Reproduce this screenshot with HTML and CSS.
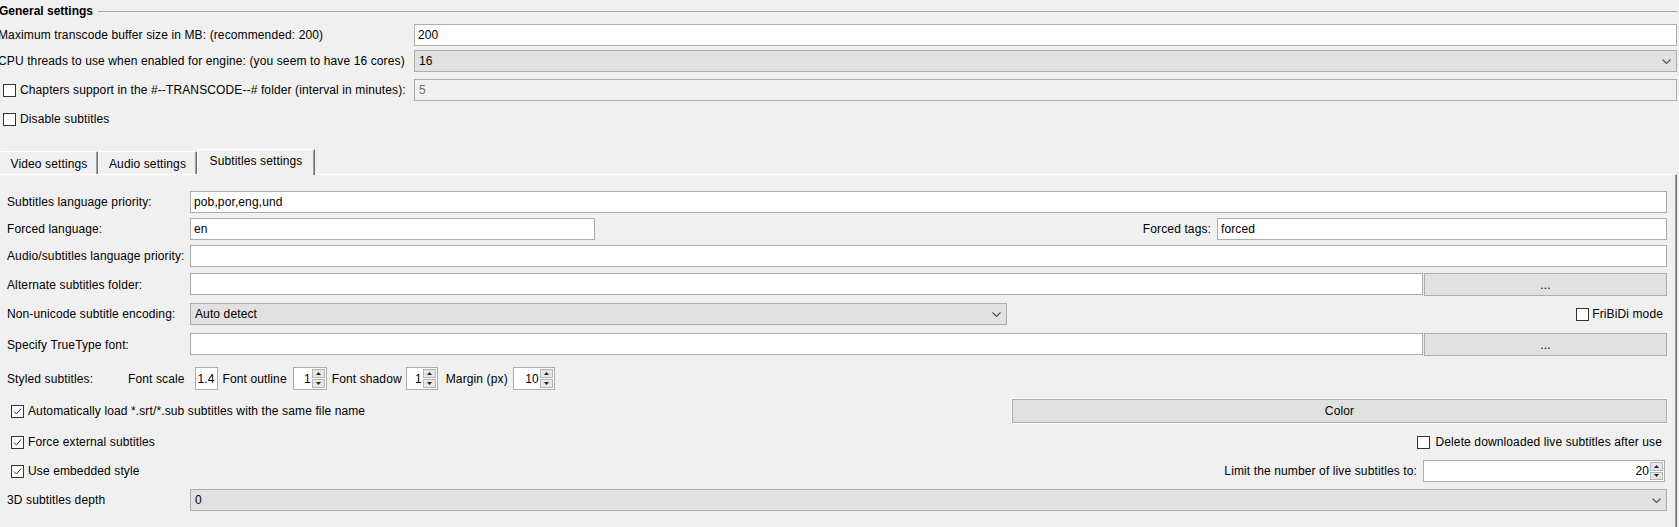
FILE: index.html
```html
<!DOCTYPE html>
<html>
<head>
<meta charset="utf-8">
<title>Subtitles settings</title>
<link rel="stylesheet" href="styles.css">
</head>
<body>
<div class="general">
  <div class="ghead"><span class="gtitle">General settings</span><span class="gline"></span></div>
  <div class="grow g1">
    <span class="glabel">Maximum transcode buffer size in MB: (recommended: 200)</span>
    <div class="field input">200</div>
  </div>
  <div class="grow g2">
    <span class="glabel">CPU threads to use when enabled for engine: (you seem to have 16 cores)</span>
    <div class="field select"><span>16</span><svg class="chev" width="9" height="5" viewBox="0 0 9 5"><path d="M0.5 0.5 L4.5 4.5 L8.5 0.5" fill="none" stroke="#505050" stroke-width="1.1"/></svg></div>
  </div>
  <div class="grow g3">
    <div class="check gcheck"><span class="box"></span><span>Chapters support in the #--TRANSCODE--# folder (interval in minutes):</span></div>
    <div class="field input disabled">5</div>
  </div>
  <div class="grow g4">
    <div class="check gcheck"><span class="box"></span><span>Disable subtitles</span></div>
  </div>
</div>

<div class="tabs">
  <div class="tab t-video">Video settings</div>
  <div class="tab t-audio">Audio settings</div>
  <div class="tab t-subs active">Subtitles settings</div>
</div>

<div class="panel">
  <div class="prow p1">
    <span class="plabel">Subtitles language priority:</span>
    <div class="field input">pob,por,eng,und</div>
  </div>
  <div class="prow p2">
    <span class="plabel">Forced language:</span>
    <div class="input forced-lang">en</div>
    <span class="spacer"></span>
    <span class="tagslabel">Forced tags:</span>
    <div class="input forced-tags">forced</div>
  </div>
  <div class="prow p3">
    <span class="plabel">Audio/subtitles language priority:</span>
    <div class="field input"></div>
  </div>
  <div class="prow p4">
    <span class="plabel">Alternate subtitles folder:</span>
    <div class="field input"></div>
    <div class="button browse">...</div>
  </div>
  <div class="prow p5">
    <span class="plabel">Non-unicode subtitle encoding:</span>
    <div class="select enc"><span>Auto detect</span><svg class="chev" width="9" height="5" viewBox="0 0 9 5"><path d="M0.5 0.5 L4.5 4.5 L8.5 0.5" fill="none" stroke="#505050" stroke-width="1.1"/></svg></div>
    <span class="spacer"></span>
    <div class="check fribidi"><span class="box"></span><span>FriBiDi mode</span></div>
  </div>
  <div class="prow p6">
    <span class="plabel">Specify TrueType font:</span>
    <div class="field input"></div>
    <div class="button browse">...</div>
  </div>
  <div class="prow p7">
    <span class="slabel">Styled subtitles:</span>
    <span class="stext">Font scale</span>
    <div class="input scale">1.4</div>
    <span class="stext outline-l">Font outline</span>
    <div class="spin w-outline"><span class="sv">1</span><div class="sbtns"><div class="sbtn"><svg width="5" height="3" viewBox="0 0 5 3"><path d="M2.5 0 L5 3 L0 3 Z" fill="#222"/></svg></div><div class="sbtn"><svg width="5" height="3" viewBox="0 0 5 3"><path d="M0 0 L5 0 L2.5 3 Z" fill="#222"/></svg></div></div></div>
    <span class="stext shadow-l">Font shadow</span>
    <div class="spin w-shadow"><span class="sv">1</span><div class="sbtns"><div class="sbtn"><svg width="5" height="3" viewBox="0 0 5 3"><path d="M2.5 0 L5 3 L0 3 Z" fill="#222"/></svg></div><div class="sbtn"><svg width="5" height="3" viewBox="0 0 5 3"><path d="M0 0 L5 0 L2.5 3 Z" fill="#222"/></svg></div></div></div>
    <span class="stext margin-l">Margin (px)</span>
    <div class="spin w-margin"><span class="sv">10</span><div class="sbtns"><div class="sbtn"><svg width="5" height="3" viewBox="0 0 5 3"><path d="M2.5 0 L5 3 L0 3 Z" fill="#222"/></svg></div><div class="sbtn"><svg width="5" height="3" viewBox="0 0 5 3"><path d="M0 0 L5 0 L2.5 3 Z" fill="#222"/></svg></div></div></div>
  </div>
  <div class="prow p8">
    <div class="check pcheck"><span class="box checked"><svg width="11" height="11" viewBox="0 0 11 11"><path d="M2 5.5 L4.5 8 L9 2.5" fill="none" stroke="#333" stroke-width="1"/></svg></span><span>Automatically load *.srt/*.sub subtitles with the same file name</span></div>
    <span class="spacer"></span>
    <div class="button color">Color</div>
  </div>
  <div class="prow p9">
    <div class="check pcheck"><span class="box checked"><svg width="11" height="11" viewBox="0 0 11 11"><path d="M2 5.5 L4.5 8 L9 2.5" fill="none" stroke="#333" stroke-width="1"/></svg></span><span>Force external subtitles</span></div>
    <span class="spacer"></span>
    <div class="check delete"><span class="box"></span><span>Delete downloaded live subtitles after use</span></div>
  </div>
  <div class="prow p10">
    <div class="check pcheck"><span class="box checked"><svg width="11" height="11" viewBox="0 0 11 11"><path d="M2 5.5 L4.5 8 L9 2.5" fill="none" stroke="#333" stroke-width="1"/></svg></span><span>Use embedded style</span></div>
    <span class="spacer"></span>
    <span class="limitlabel">Limit the number of live subtitles to:</span>
    <div class="spin limit"><span class="sv">20</span><div class="sbtns"><div class="sbtn"><svg width="5" height="3" viewBox="0 0 5 3"><path d="M2.5 0 L5 3 L0 3 Z" fill="#222"/></svg></div><div class="sbtn"><svg width="5" height="3" viewBox="0 0 5 3"><path d="M0 0 L5 0 L2.5 3 Z" fill="#222"/></svg></div></div></div>
  </div>
  <div class="prow p11">
    <span class="plabel">3D subtitles depth</span>
    <div class="field select"><span>0</span><svg class="chev" width="9" height="5" viewBox="0 0 9 5"><path d="M0.5 0.5 L4.5 4.5 L8.5 0.5" fill="none" stroke="#505050" stroke-width="1.1"/></svg></div>
  </div>
</div>
</body>
</html>
```

FILE: styles.css
```css
* { box-sizing: border-box; }
html, body {
  margin: 0;
  padding: 0;
  background: #f0f0f0;
  overflow: hidden;
}
body {
  font-family: "Liberation Sans", Arial, sans-serif;
  font-size: 12px;
  letter-spacing: 0.12px;
  color: #000;
  width: 1679px;
  height: 527px;
}

/* ---------- General settings ---------- */
.general {
  margin-right: 2px;
  display: flex;
  flex-direction: column;
}
.ghead {
  height: 21px;
  display: flex;
  align-items: center;
  gap: 5px;
  margin-left: -1px;
}
.gtitle {
  font-weight: bold;
  letter-spacing: 0;
  white-space: nowrap;
}
.gline {
  flex: 1;
  height: 1px;
  background: #a8a8a8;
  margin-top: 1px;
}
.grow {
  display: flex;
  align-items: center;
  height: 22px;
}
.g1 { margin-top: 3px; }
.g2 { margin-top: 4px; }
.g3 { margin-top: 7px; }
.g4 { margin-top: 7px; }
.glabel {
  width: 416px;
  margin-left: -2px;
  white-space: nowrap;
  flex: none;
}
.gcheck {
  width: 411px;
  margin-left: 3px;
  flex: none;
}

/* ---------- Common controls ---------- */
.field { flex: 1; min-width: 0; }
.input {
  height: 22px;
  background: #fff;
  border: 1px solid #adadad;
  padding: 0 3px;
  display: flex;
  align-items: center;
  white-space: nowrap;
}
.input.disabled {
  background: #f0f0f0;
  color: #6d6d6d;
  padding-left: 4px;
}
.select {
  height: 22px;
  background: #e1e1e1;
  border: 1px solid #adadad;
  padding: 0 5px 0 4px;
  display: flex;
  align-items: center;
  justify-content: space-between;
}
.chev { display: block; }
.button {
  height: 23px;
  background: #e1e1e1;
  border: 1px solid #adadad;
  display: flex;
  align-items: center;
  justify-content: center;
}
.check {
  display: flex;
  align-items: center;
  white-space: nowrap;
}
.box {
  width: 13px;
  height: 13px;
  border: 1px solid #333;
  background: #fff;
  margin-right: 4px;
  flex: none;
  display: flex;
  align-items: center;
  justify-content: center;
}
.box svg { display: block; }
.spacer { flex: 1; }

/* ---------- Tabs ---------- */
.tabs {
  margin-top: 19px;
  height: 25px;
  display: flex;
  align-items: flex-end;
  position: relative;
  z-index: 2;
}
.tab {
  height: 23px;
  border-top: 1px solid #fff;
  border-left: 1px solid #fff;
  border-right: 1px solid #6e6e6e;
  box-shadow: inset -1px 0 0 #a0a0a0;
  padding-top: 2px;
  display: flex;
  align-items: center;
  justify-content: center;
  white-space: nowrap;
  background: #f0f0f0;
}
.t-video { width: 98px; border-left-color: #f0f0f0; }
.t-audio { width: 99px; }
.t-subs { width: 118px; }
.tab.active {
  height: 26px;
  margin-bottom: -1px;
  padding-top: 0;
  padding-bottom: 3px;
}

/* ---------- Panel ---------- */
.panel {
  margin-right: 2px;
  border-top: 1px solid #fff;
  border-right: 1px solid #6e6e6e;
  box-shadow: inset -1px 0 0 #a0a0a0;
  padding: 15px 9px 40px 7px;
  display: flex;
  flex-direction: column;
  position: relative;
  z-index: 1;
}
.prow {
  display: flex;
  align-items: center;
  height: 22px;
  white-space: nowrap;
}
.plabel {
  width: 183px;
  flex: none;
}
.p1 { margin-top: 1px; }
.p2 { margin-top: 5px; }
.p3 { margin-top: 5px; }
.p4 { margin-top: 6px; height: 23px; }
.p5 { margin-top: 7px; }
.p6 { margin-top: 8px; height: 23px; }
.p7 { margin-top: 11px; height: 23px; }
.p8 { margin-top: 9px; height: 24px; }
.p9 { margin-top: 7px; height: 24px; }
.p10 { margin-top: 6px; height: 22px; }
.p11 { margin-top: 7px; }

.p4 .input, .p6 .input { height: 22px; align-self: flex-start; }
.browse {
  width: 243px;
  margin-left: 1px;
  flex: none;
}
.forced-lang { width: 405px; flex: none; }
.tagslabel { margin-right: 6px; }
.forced-tags { width: 450px; flex: none; }
.enc { width: 817px; flex: none; }
.fribidi { margin-right: 4px; }
.fribidi .box { margin-right: 3px; }

/* styled subtitles row */
.slabel { width: 121px; flex: none; }
.stext { flex: none; }
.scale {
  width: 23px;
  height: 23px;
  margin-left: 10px;
  padding: 0 2px;
  justify-content: center;
}
.outline-l { margin-left: 5px; }
.shadow-l { margin-left: 5px; }
.margin-l { margin-left: 8px; }
.spin {
  height: 23px;
  background: #fff;
  border: 1px solid #adadad;
  display: flex;
  align-items: stretch;
  flex: none;
}
.sv {
  flex: 1;
  display: flex;
  align-items: center;
  justify-content: flex-end;
  padding-right: 1px;
}
.sbtns {
  width: 14px;
  display: flex;
  flex-direction: column;
  padding: 1px 1px 1px 0;
  gap: 1px;
}
.sbtn {
  flex: 1;
  background: #e6e6e6;
  border: 1px solid #b5b5b5;
  display: flex;
  align-items: center;
  justify-content: center;
}
.sbtn svg { display: block; }
.w-outline { width: 34px; margin-left: 6px; }
.w-shadow { width: 32px; margin-left: 4px; }
.w-margin { width: 42px; margin-left: 5px; }

/* checkbox rows */
.pcheck { margin-left: 4px; }
.color {
  width: 655px;
  height: 24px;
  flex: none;
  box-shadow: 0 0 0 1px #fff;
}
.delete { margin-right: 5px; }
.delete .box { margin-right: 5px; }
.limitlabel { margin-right: 6px; }
.limit {
  width: 242px;
  height: 22px;
  margin-right: 2px;
}
```
